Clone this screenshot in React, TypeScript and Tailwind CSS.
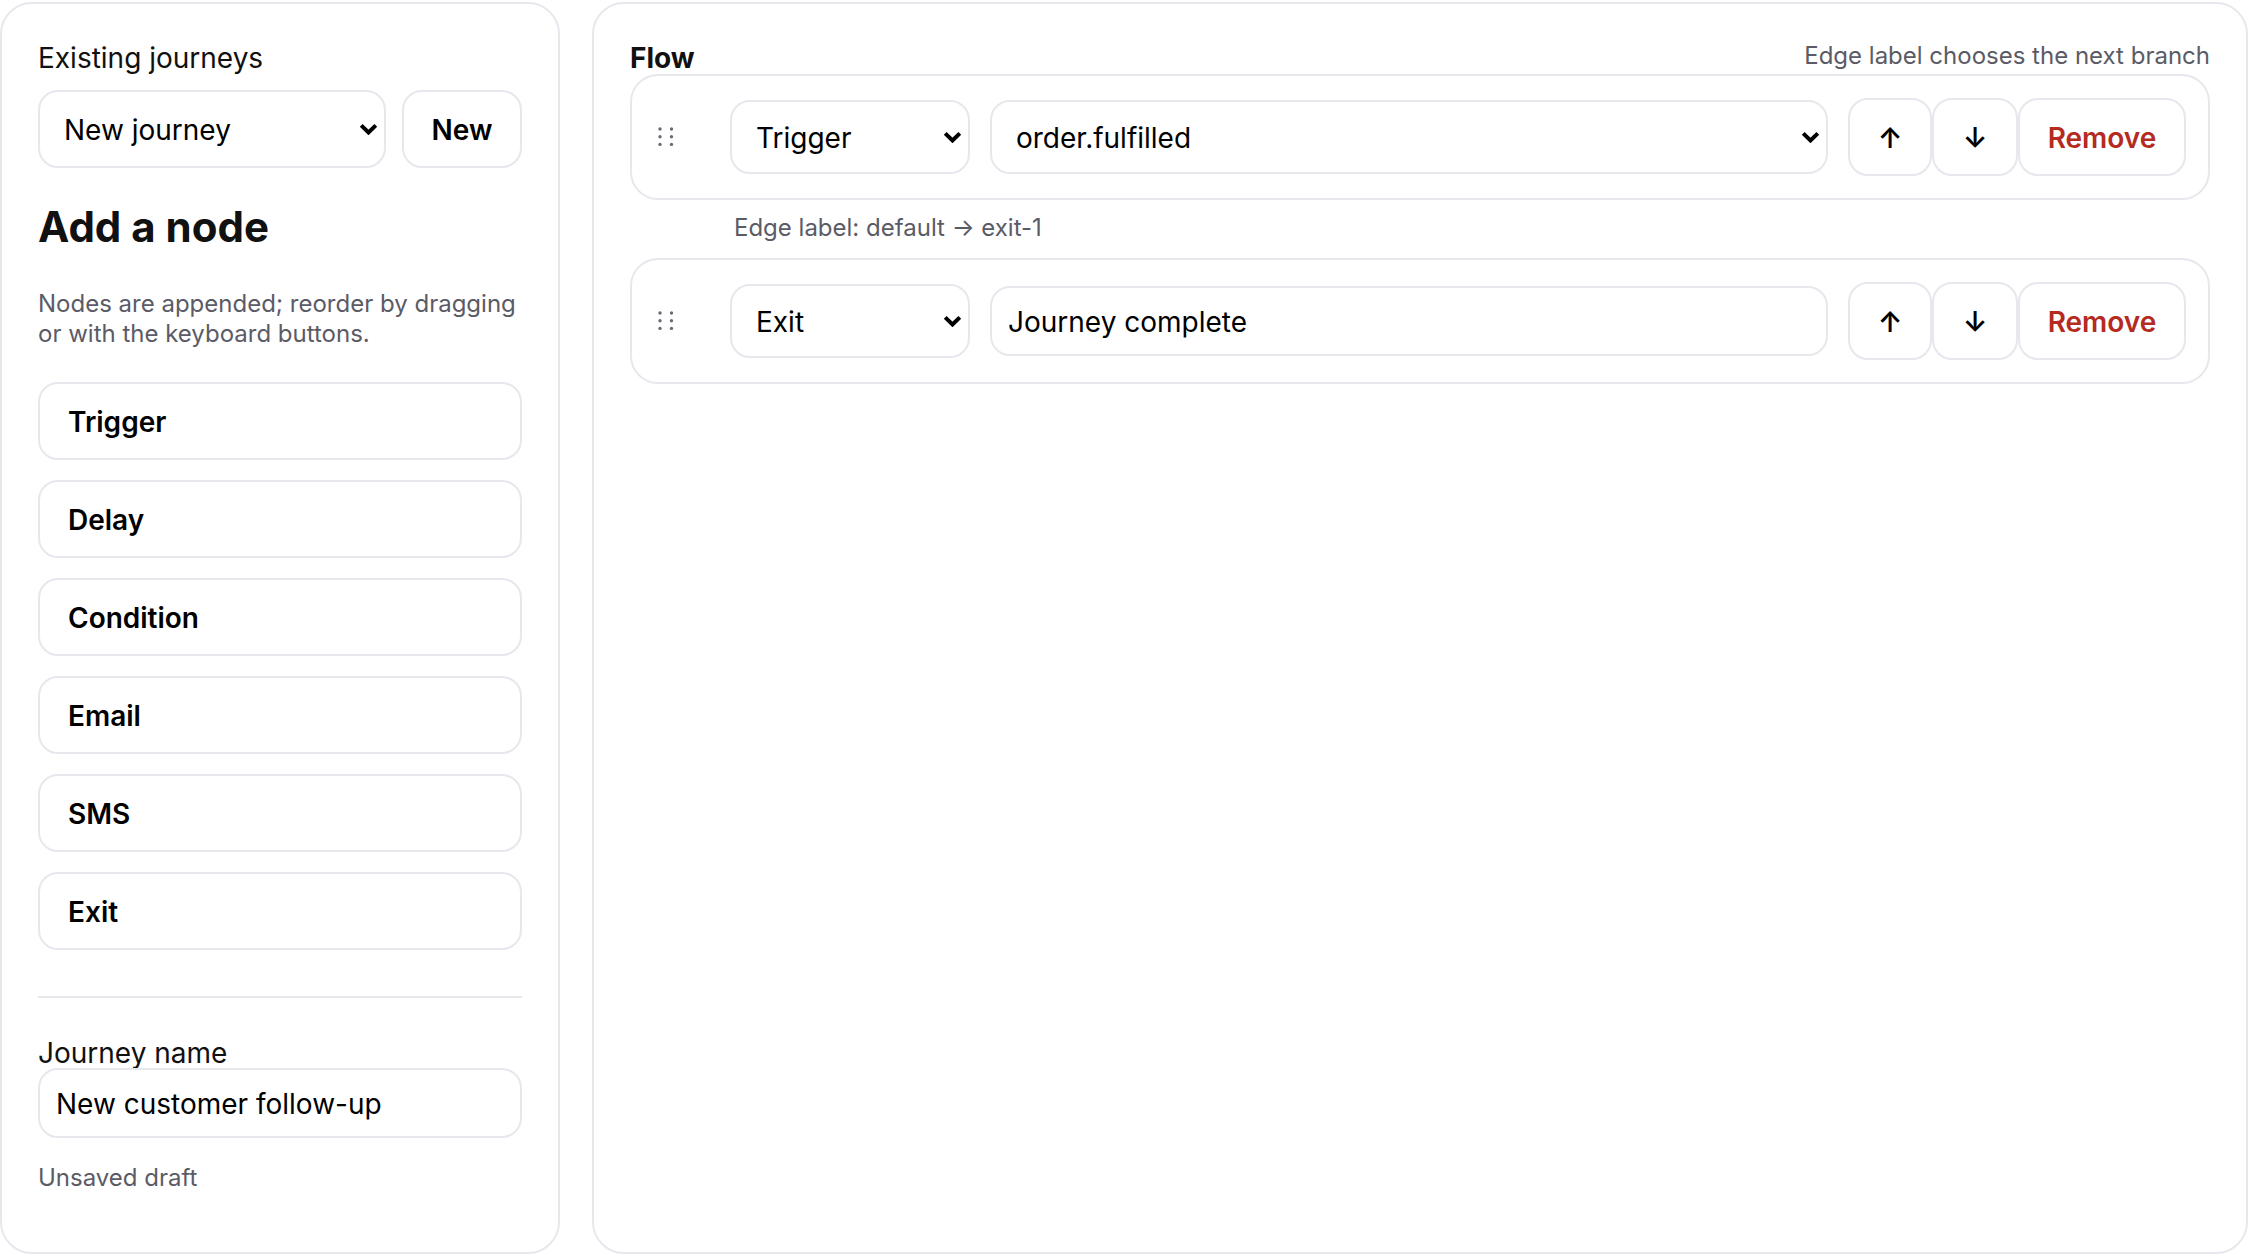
import React from "react";

const font = { fontFamily: "Inter, 'Liberation Sans', sans-serif" };

function Chevron() {
  return (
    <svg className="pointer-events-none absolute right-[8px] top-1/2 -translate-y-1/2" width="19" height="13" viewBox="0 0 19 13" fill="none">
      <path d="M2.2 2.8 L9.5 10 L16.8 2.8" stroke="#000" strokeWidth="4" />
    </svg>
  );
}

function Select({ value, className, options }: { value: string; className: string; options: string[] }) {
  return (
    <div className={`relative ${className}`}>
      <select
        defaultValue={value}
        className="h-full w-full appearance-none rounded-[20px] border-2 border-[#e7e7ee] bg-white pl-[24px] pr-[30px] pt-[2px] text-[28px] text-black outline-none font-[Inter]"
      >
        {options.map((o) => (
          <option key={o}>{o}</option>
        ))}
      </select>
      <Chevron />
    </div>
  );
}

function Handle() {
  return (
    <svg width="16" height="20" viewBox="0 0 16 20" className="shrink-0 fill-[#6b6b76]">
      <circle cx="2" cy="2" r="1.7" />
      <circle cx="13.5" cy="2" r="1.7" />
      <circle cx="2" cy="9.7" r="1.7" />
      <circle cx="13.5" cy="9.7" r="1.7" />
      <circle cx="2" cy="17.4" r="1.7" />
      <circle cx="13.5" cy="17.4" r="1.7" />
    </svg>
  );
}

function Row({ type, children }: { type: string; children: React.ReactNode }) {
  return (
    <div className="flex h-[126px] items-center rounded-[28px] border-2 border-[#e7e7ee] bg-white pr-[22px]">
      <div className="flex w-[98px] shrink-0 justify-start pl-[26px]">
        <Handle />
      </div>
      <Select value={type} options={["Trigger", "Delay", "Condition", "Email", "SMS", "Exit"]} className="h-[74px] w-[240px] shrink-0" />
      <div className="ml-[20px] flex min-w-0 flex-1 items-center">{children}</div>
      <div className="ml-[20px] flex shrink-0">
        <button className="h-[78px] w-[84px] rounded-[20px] border-2 border-[#e7e7ee] bg-white pt-[2px] text-[28px] font-semibold text-black">↑</button>
        <button className="h-[78px] w-[86px] rounded-[20px] border-2 border-[#e7e7ee] bg-white pt-[2px] text-[28px] font-semibold text-black">↓</button>
        <button className="h-[78px] w-[168px] rounded-[20px] border-2 border-[#e7e7ee] bg-white pt-[2px] text-[28px] font-semibold text-[#b42b1f]">Remove</button>
      </div>
    </div>
  );
}

export default function App() {
  const nodes = ["Trigger", "Delay", "Condition", "Email", "SMS", "Exit"];
  return (
    <div style={font} className="flex h-[1254px] w-[2248px] gap-[32px] overflow-hidden bg-white pt-[2px] text-[#111]">
      <aside className="flex h-[1252px] w-[560px] shrink-0 flex-col rounded-[32px] border-2 border-[#e7e7ee] bg-white px-[36px] pt-[37px]">
        <label className="h-[34px] text-[28px] leading-[34px]">Existing journeys</label>
        <div className="mt-[15px] flex h-[78px] gap-[16px]">
          <Select value="New journey" options={["New journey"]} className="h-[78px] flex-1" />
          <button className="h-[78px] w-[120px] shrink-0 rounded-[20px] border-2 border-[#e7e7ee] bg-white pt-[2px] text-[28px] font-semibold text-black">New</button>
        </div>
        <h2 className="mt-[35px] text-[42px] font-bold leading-[48px]">Add a node</h2>
        <p className="mt-[38px] text-[24px] leading-[30px] text-[#5b5b66]">
          Nodes are appended; reorder by dragging or with the keyboard buttons.
        </p>
        <div className="mt-[33px] flex flex-col gap-[20px]">
          {nodes.map((n) => (
            <button key={n} className="h-[78px] rounded-[20px] border-2 border-[#e7e7ee] bg-white pl-[28px] pt-[2px] text-left text-[28px] font-semibold text-black">
              {n}
            </button>
          ))}
        </div>
        <hr className="mt-[46px] border-0 border-t-2 border-[#e7e7ee]" />
        <label className="mt-[39px] h-[31px] text-[28px] leading-[32px]">Journey name</label>
        <input
          defaultValue="New customer follow-up"
          className="h-[70px] w-full rounded-[20px] border-2 border-[#e7e7ee] bg-white pl-[16px] pt-[1px] text-[28px] text-black outline-none"
        />
        <p className="mt-[25px] text-[24px] leading-[30px] text-[#5b5b66]">Unsaved draft</p>
      </aside>
      <main className="h-[1252px] min-w-0 flex-1 rounded-[32px] border-2 border-[#e7e7ee] bg-white pl-[36px] pr-[36px] pt-[37px]">
        <div className="flex h-[33px] items-center justify-between">
          <h3 className="text-[28px] font-bold leading-[34px]">Flow</h3>
          <span className="-mt-[3px] text-[24px] leading-[30px] text-[#5b5b66]">Edge label chooses the next branch</span>
        </div>
        <Row type="Trigger">
          <Select value="order.fulfilled" options={["order.fulfilled"]} className="h-[74px] w-full" />
        </Row>
        <div className="flex h-[58px] items-center pb-[3px] pl-[104px] text-[24px] text-[#5b5b66]">Edge label: default → exit-1</div>
        <Row type="Exit">
          <input
            defaultValue="Journey complete"
            className="h-[70px] w-full rounded-[20px] border-2 border-[#e7e7ee] bg-white pl-[16px] pt-[2px] text-[28px] text-black outline-none"
          />
        </Row>
      </main>
    </div>
  );
}
